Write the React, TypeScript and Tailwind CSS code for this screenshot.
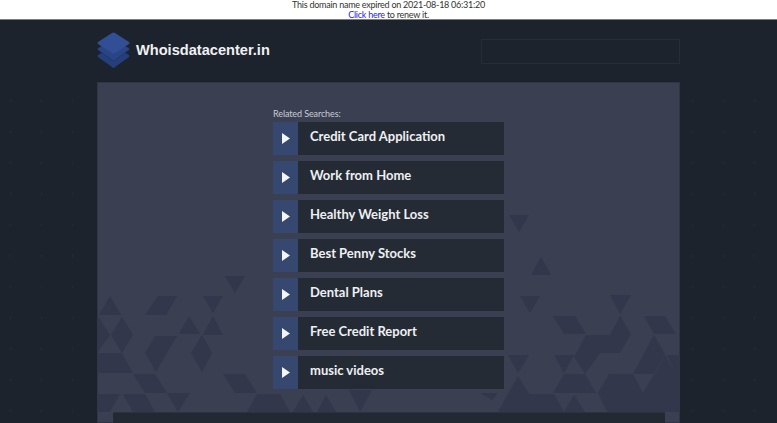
import React from "react";

const searches = [
  "Credit Card Application",
  "Work from Home",
  "Healthy Weight Loss",
  "Best Penny Stocks",
  "Dental Plans",
  "Free Credit Report",
  "music videos",
];

// Triangle shapes of the panel background, in panel coordinates (page x - 97, page y - 82)
const shapes = [
  "13,214 2,233 24,233",
  "61,214 80,214 69,233 48,233",
  "128,194 148,194 138,211",
  "106,214 126,214 116,231",
  "92,234 82,252 103,252",
  "116,234 106,253 126,253",
  "25,235 36,253 25,271 14,253",
  "0,233 13,253 0,271",
  "58,254 80,254 59,290 48,271",
  "105,253 115,271 105,290 94,271",
  "0,271 25,271 36,291 0,291",
  "36,292 58,292 70,311 48,311",
  "126,292 148,292 160,311 138,311",
  "0,312 23,312 13,330 0,330",
  "26,312 48,312 58,330 36,330",
  "70,311 93,311 81,330",
  "160,312 183,312 193,330 150,330",
  "196,330 206,313 216,330",
  "220,330 229,313 239,330",
  "252,308 275,308 263,330",
  "412,133 432,133 422,150",
  "444,175 434,193 454,193",
  "423,214 443,214 433,231",
  "513,213 534,213 523,232",
  "456,234 478,234 489,252 467,252",
  "547,234 568,234 579,252 557,252",
  "523,234 534,252 523,271 503,271 488,292 477,275 489,253 513,253",
  "557,253 568,272 557,292 536,292",
  "568,273 558,292 579,292",
  "570,273 583,273 583,292 579,292",
  "411,273 432,273 421,291",
  "457,273 477,273 467,291",
  "421,294 432,312 457,312 467,330 401,330",
  "467,292 488,292 499,311 456,311",
  "477,313 488,330 467,330",
  "512,292 536,292 546,311 557,292 583,292 583,330 510,330 501,311",
  "383,311 401,311 395,318",
];

function Stack() {
  return (
    <svg width="33" height="38" viewBox="0 0 33 38">
      <path d="M16.5 14 L32 23 Q33 24 32 25 L18 35 Q16.5 37 15 35 L1 25 Q0 24 1 23 Z" fill="#253f7c" />
      <path d="M16.5 8 L32 16 Q33 17 32 18 L18 28 Q16.5 29.5 15 28 L1 18 Q0 17 1 16 Z" fill="#2a4585" stroke="#1f2c4c" strokeWidth="0.5" />
      <path d="M15 1 Q16.5 0 18 1 L32 10 Q33 11 32 12 L18 21 Q16.5 22 15 21 L1 12 Q0 11 1 10 Z" fill="#324f96" />
    </svg>
  );
}

function SearchRow({ label }: { label: string }) {
  return (
    <a className="flex h-[33px] w-[231px]">
      <div className="flex w-[25px] items-center justify-center bg-[#364770]">
        <svg width="8" height="11" viewBox="0 0 8 11">
          <path d="M0 0 L8 5.5 L0 11 Z" fill="#f4f5f7" />
        </svg>
      </div>
      <div className="flex-1 bg-[#252b35] pl-[12px] font-['Lato',sans-serif] text-[13px] leading-[28px] font-bold text-[#eef0f2]">
        {label}
      </div>
    </a>
  );
}

export default function App() {
  return (
    <div className="relative h-[423px] overflow-hidden bg-[#1c232d] font-['Lato',sans-serif]">
      {/* faint specks on the page background */}
      <svg className="absolute top-[90px] left-0" width="777" height="333">
        <defs>
          <pattern id="specks" width="31" height="31" patternUnits="userSpaceOnUse">
            <path d="M9 11h3M10.5 9.5v3" stroke="#212833" strokeWidth="1" />
            <rect x="24" y="24" width="1" height="1" fill="#212833" />
          </pattern>
        </defs>
        <rect width="777" height="333" fill="url(#specks)" />
      </svg>

      <div className="relative h-[20px] border-b border-[#7b7d82] bg-white text-center text-[9px] leading-[10px] tracking-[-0.25px] text-[#333]">
        <div>This domain name expired on 2021-08-18 06:31:20</div>
        <div>
          <a className="text-[#2323ee]">Click here</a> to renew it.
        </div>
      </div>

      <div className="relative mx-auto w-[583px]">
        <header className="flex h-[62px] items-center justify-between">
          <div className="flex items-center gap-[6px]">
            <Stack />
            <span className="font-['Liberation_Sans',sans-serif] text-[14.6px] font-bold text-[#f0f1f3]">
              Whoisdatacenter.in
            </span>
          </div>
          <div className="h-[25px] w-[199px] border border-[#262c38]" />
        </header>

        <main className="relative h-[341px] border border-[#2f3546] bg-[#3a3f52] pt-[24px]">
          <svg className="absolute -top-px -left-px" width="583" height="341">
            {shapes.map((points) => (
              <polygon key={points} points={points} fill="#32374b" />
            ))}
          </svg>
          <div className="relative ml-[175px] w-[231px]">
            <p className="mb-[1px] text-[9px] leading-[14px] tracking-[-0.1px] text-[#c9ccd3]">Related Searches:</p>
            <div className="flex flex-col gap-[6px]">
              {searches.map((label) => (
                <SearchRow key={label} label={label} />
              ))}
            </div>
          </div>
          <div className="absolute top-[329px] left-[15px] h-[40px] w-[552px] border-t border-[#2c3240] bg-[#232933]" />
        </main>
      </div>
    </div>
  );
}
